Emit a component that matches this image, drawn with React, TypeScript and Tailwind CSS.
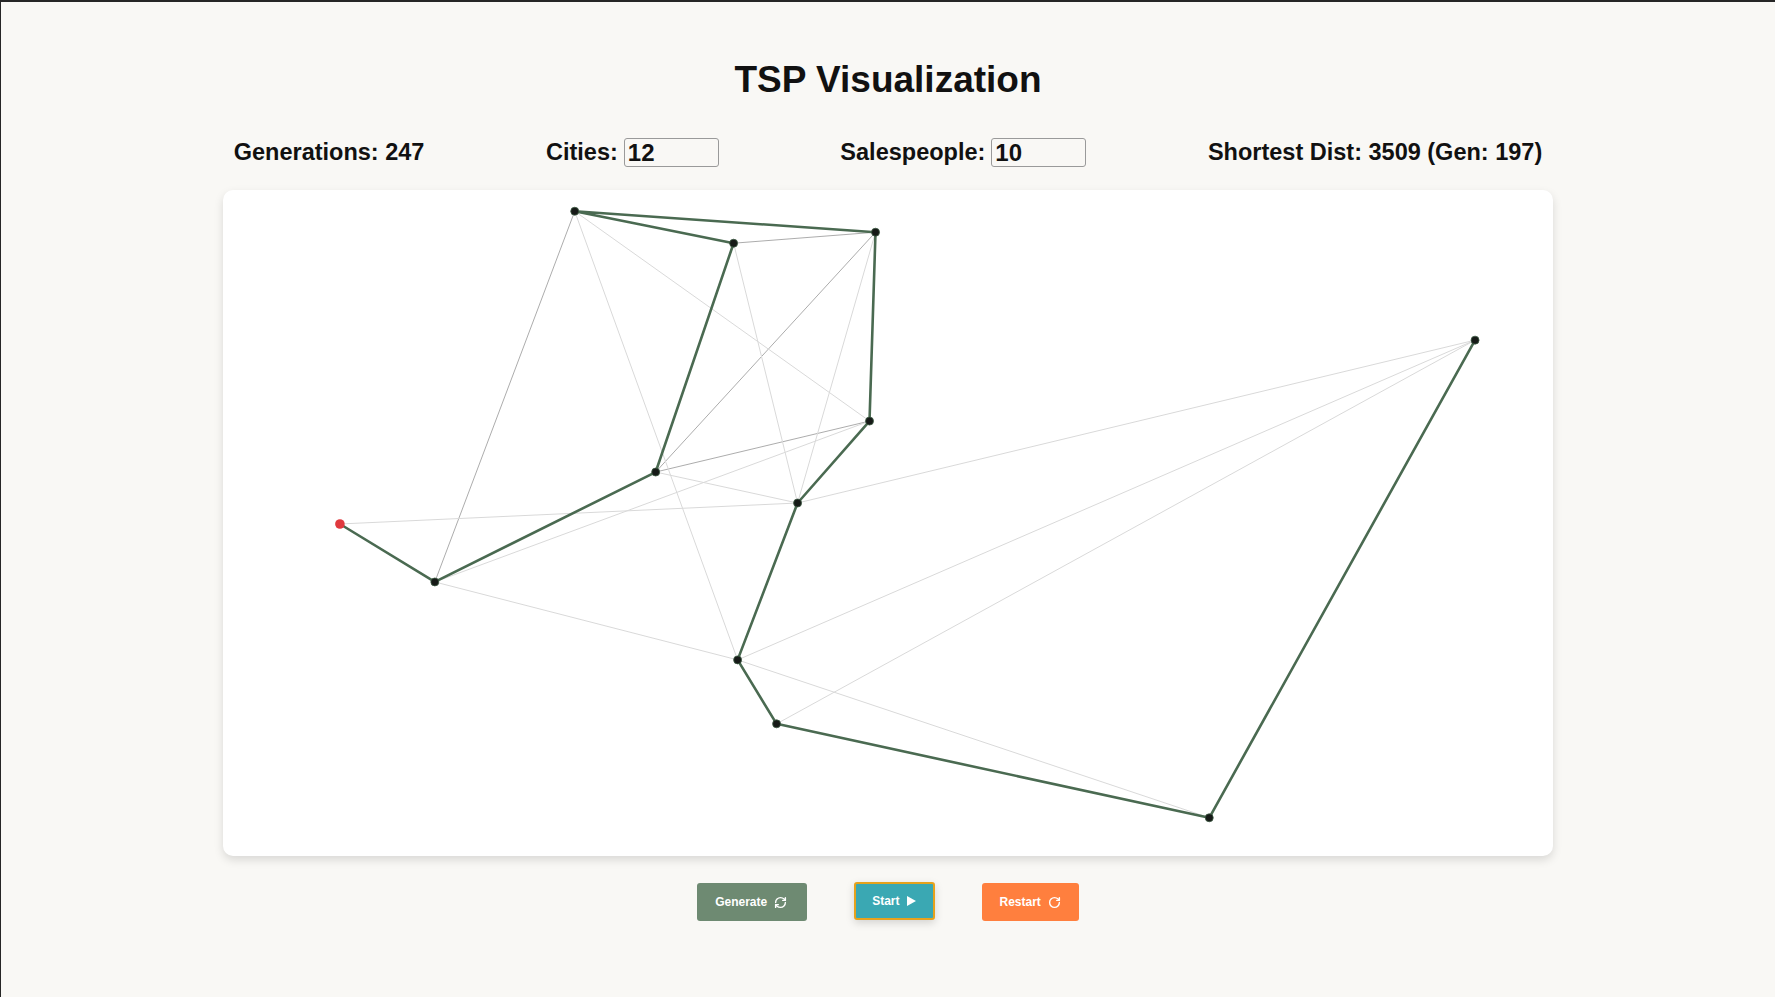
import React from 'react';
import { RefreshCw, RotateCw } from 'lucide-react';

type Pt = { x: number; y: number };

// city positions inside the canvas card (card is 1331 x 666)
const cities: Record<string, Pt> = {
  A: { x: 352, y: 21 },
  B: { x: 511, y: 53 },
  C: { x: 653, y: 42 },
  D: { x: 647, y: 231 },
  E: { x: 433, y: 282 },
  F: { x: 575, y: 313 },
  R: { x: 117, y: 334 },
  G: { x: 212, y: 392 },
  H: { x: 515, y: 470 },
  I: { x: 554, y: 534 },
  J: { x: 987, y: 628 },
  K: { x: 1253, y: 150 },
};

const bestRoute = ['R', 'G', 'E', 'B', 'A', 'C', 'D', 'F', 'H', 'I', 'J', 'K'];

const otherEdges: [string, string, boolean][] = [
  ['A', 'G', true],
  ['C', 'E', true],
  ['D', 'E', true],
  ['B', 'C', true],
  ['A', 'H', false],
  ['A', 'D', false],
  ['B', 'F', false],
  ['C', 'F', false],
  ['D', 'G', false],
  ['E', 'F', false],
  ['R', 'F', false],
  ['G', 'H', false],
  ['H', 'J', false],
  ['F', 'K', false],
  ['H', 'K', false],
  ['I', 'K', false],
];

function Stat({ label, children }: { label: string; children?: React.ReactNode }) {
  return (
    <div className="flex items-center gap-[6px]">
      <span className="leading-none">{label}</span>
      {children}
    </div>
  );
}

function NumberBox({ value }: { value: string }) {
  return (
    <input
      defaultValue={value}
      className="w-[95px] h-[29px] border border-[#9a9a9a] rounded-[3px] px-[3px] bg-white/0 text-[24px] leading-none font-bold text-[#111] outline-none"
    />
  );
}

function TourCanvas() {
  const route = bestRoute.map((k) => `${cities[k].x},${cities[k].y}`).join(' ');
  return (
    <svg viewBox="0 0 1331 666" className="w-full h-full">
      {otherEdges.map(([a, b, dark]) => (
        <line
          key={a + b}
          x1={cities[a].x}
          y1={cities[a].y}
          x2={cities[b].x}
          y2={cities[b].y}
          stroke={dark ? '#a3a3a3' : '#d9d9d9'}
          strokeWidth={dark ? 0.9 : 1}
        />
      ))}
      <polyline points={route} fill="none" stroke="#4a6a51" strokeWidth={2.6} strokeLinejoin="round" />
      {Object.entries(cities).map(([k, c]) =>
        k === 'R' ? (
          <circle key={k} cx={c.x} cy={c.y} r={4.8} fill="#e0393e" />
        ) : (
          <circle key={k} cx={c.x} cy={c.y} r={4} fill="#161a17" stroke="#3c5a43" strokeWidth={0.8} />
        )
      )}
    </svg>
  );
}

export default function App() {
  return (
    <div className="min-h-screen bg-[#f9f8f5] border-t-2 border-l border-[#262626] font-['Liberation_Sans',Arial,sans-serif] text-[#111]">
      <h1 className="pt-[59px] text-center text-[37px] leading-none font-bold">TSP Visualization</h1>

      {/* Stats */}
      <div className="w-3/4 mx-auto mt-[40px] px-[11px] flex justify-between items-center text-[23.5px] font-bold">
        <Stat label="Generations: 247" />
        <Stat label="Cities:">
          <NumberBox value="12" />
        </Stat>
        <Stat label="Salespeople:">
          <NumberBox value="10" />
        </Stat>
        <Stat label="Shortest Dist: 3509 (Gen: 197)" />
      </div>

      {/* Canvas */}
      <div className="w-[1330px] h-[666px] mx-auto mt-[23px] bg-white rounded-[10px] shadow-[0_4px_10px_rgba(0,0,0,0.13)]">
        <TourCanvas />
      </div>

      {/* Controls */}
      <div className="mt-[27px] flex justify-center items-start gap-[47px]">
        <button className="h-[38px] pl-[18px] pr-[20px] flex items-center gap-[7px] bg-[#6e8a72] rounded-[3px] text-white text-[12px] font-bold">
          Generate
          <RefreshCw className="w-[13px] h-[13px]" strokeWidth={2.6} />
        </button>
        <button className="h-[38px] -mt-[1.5px] pl-[16px] pr-[17px] flex items-center gap-[7px] bg-[#3aa8b3] border-2 border-[#e6a21c] rounded-[3px] text-white text-[12px] font-bold shadow-[0_3px_8px_rgba(0,0,0,0.15)]">
          Start
          <svg viewBox="0 0 10 11" className="w-[9px] h-[10px]">
            <polygon points="0,0 10,5.5 0,11" fill="white" />
          </svg>
        </button>
        <button className="h-[38px] px-[18px] flex items-center gap-[7px] bg-[#ff7f3e] rounded-[3px] text-white text-[12px] font-bold">
          Restart
          <RotateCw className="w-[13px] h-[13px]" strokeWidth={2.6} />
        </button>
      </div>
    </div>
  );
}
